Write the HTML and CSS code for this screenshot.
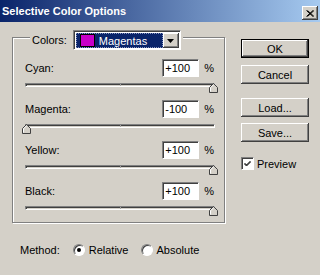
FILE: index.html
```html
<!DOCTYPE html>
<html lang="en">
<head>
  <meta charset="UTF-8">
  <title>Selective Color Options</title>
  <link rel="stylesheet" href="styles.css">
</head>
<body>
  <div class="dialog">
    <div class="titlebar">
      <span class="title">Selective Color Options</span>
      <span class="close">
        <svg width="8" height="7" viewBox="0 0 8 7"><path d="M0.5 0.5 L7 6.5 M1.5 0.5 L8 6.5 M7 0.5 L0.5 6.5 M8 0.5 L1.5 6.5" stroke="#000" stroke-width="1" fill="none"/></svg>
      </span>
    </div>

    <div class="content">
      <div class="left">
        <div class="group">
          <div class="group-head">
            <span class="colors-label">Colors:</span>
            <div class="combo">
              <div class="combo-value">
                <span class="swatch"></span>
                <span>Magentas</span>
              </div>
              <span class="combo-btn">
                <svg width="7" height="4" viewBox="0 0 7 4"><path d="M0 0 H7 L3.5 4 Z" fill="#000"/></svg>
              </span>
            </div>
          </div>

          <div class="adjs">
            <div class="adj">
              <div class="adj-top">
                <span>Cyan:</span>
                <span class="val"><span class="field">+100</span><span class="pct">%</span></span>
              </div>
              <div class="slider">
                <div class="track"></div>
                <svg class="thumb" style="left: calc((100% - 9px) * 1);" width="9" height="10" viewBox="0 0 9 10"><path d="M0.5 9.5 V4.5 L4.5 0.5 L8.5 4.5 V9.5 Z" fill="#d4d0c8" stroke="#404040"/><path d="M1.5 8.5 V4.8 L4.5 1.8" fill="none" stroke="#fff"/></svg>
              </div>
            </div>
            <div class="adj">
              <div class="adj-top">
                <span>Magenta:</span>
                <span class="val"><span class="field">-100</span><span class="pct">%</span></span>
              </div>
              <div class="slider">
                <div class="track"></div>
                <svg class="thumb" style="left: calc((100% - 9px) * 0);" width="9" height="10" viewBox="0 0 9 10"><path d="M0.5 9.5 V4.5 L4.5 0.5 L8.5 4.5 V9.5 Z" fill="#d4d0c8" stroke="#404040"/><path d="M1.5 8.5 V4.8 L4.5 1.8" fill="none" stroke="#fff"/></svg>
              </div>
            </div>
            <div class="adj">
              <div class="adj-top">
                <span>Yellow:</span>
                <span class="val"><span class="field">+100</span><span class="pct">%</span></span>
              </div>
              <div class="slider">
                <div class="track"></div>
                <svg class="thumb" style="left: calc((100% - 9px) * 1);" width="9" height="10" viewBox="0 0 9 10"><path d="M0.5 9.5 V4.5 L4.5 0.5 L8.5 4.5 V9.5 Z" fill="#d4d0c8" stroke="#404040"/><path d="M1.5 8.5 V4.8 L4.5 1.8" fill="none" stroke="#fff"/></svg>
              </div>
            </div>
            <div class="adj">
              <div class="adj-top">
                <span>Black:</span>
                <span class="val"><span class="field">+100</span><span class="pct">%</span></span>
              </div>
              <div class="slider">
                <div class="track"></div>
                <svg class="thumb" style="left: calc((100% - 9px) * 1);" width="9" height="10" viewBox="0 0 9 10"><path d="M0.5 9.5 V4.5 L4.5 0.5 L8.5 4.5 V9.5 Z" fill="#d4d0c8" stroke="#404040"/><path d="M1.5 8.5 V4.8 L4.5 1.8" fill="none" stroke="#fff"/></svg>
              </div>
            </div>
          </div>
        </div>

        <div class="method">
          <span class="method-label">Method:</span>
          <span class="radio checked"></span>
          <span class="radio-text">Relative</span>
          <span class="radio"></span>
          <span class="radio-text">Absolute</span>
        </div>
      </div>

      <div class="right">
        <div class="btn default">OK</div>
        <div class="btn btn-cancel">Cancel</div>
        <div class="btn btn-load">Load...</div>
        <div class="btn btn-save">Save...</div>
        <div class="preview">
          <span class="check">
            <svg width="7" height="7" viewBox="0 0 7 7"><path d="M0.5 3 L2.5 5 L6.5 1 M0.5 4 L2.5 6 L6.5 2" stroke="#000" fill="none"/></svg>
          </span>
          <span>Preview</span>
        </div>
      </div>
    </div>
  </div>
</body>
</html>
```

FILE: styles.css
```css
body { margin: 0; font-family: "Liberation Sans", Arial, sans-serif; font-size: 11px; color: #000; }
.dialog { width: 320px; height: 275px; background: #d4d0c8; overflow: hidden; }

/* title bar */
.titlebar { height: 22px; display: flex; justify-content: space-between; align-items: flex-start;
  background: linear-gradient(to right, #0a246a, #a6caf0); }
.title { color: #fff; font-weight: bold; padding-left: 2px; margin-top: 5px; }
.close { width: 16px; height: 14px; margin-top: 6px; margin-right: 2px; background: #d4d0c8;
  display: flex; align-items: center; justify-content: center; box-sizing: border-box;
  box-shadow: inset -1px -1px #404040, inset 1px 1px #fff, inset -2px -2px #808080; }

.content { display: flex; }
.left { width: 229px; padding-left: 12px; padding-top: 15px; box-sizing: border-box; }
.right { margin-left: 12px; width: 68px; display: flex; flex-direction: column; }

/* group box */
.group { width: 213px; box-sizing: border-box; border: 1px solid #808080;
  box-shadow: inset 1px 1px #fff, 1px 1px #fff; padding: 0 8px 6px 12px; }
.group-head { display: flex; align-items: center; height: 20px; margin-top: -8px; margin-left: 5px;
  padding: 0 2px; background: #d4d0c8; width: fit-content; }
.colors-label { margin-right: 6px; }
.combo { display: flex; width: 108px; height: 20px; box-sizing: border-box; background: #fff;
  border: 1px solid; border-color: #808080 #fff #fff #808080; box-shadow: inset 1px 1px #404040; padding: 2px 1px 1px 2px; }
.combo-value { flex: 1; display: flex; align-items: center; background: #0a246a; color: #fff;
  outline: 1px dotted #8a96c0; outline-offset: -1px; padding-left: 4px; }
.swatch { width: 13px; height: 11px; background: #c800c8; border: 1px solid #000; margin-right: 4px; }
.combo-btn { width: 16px; display: flex; align-items: center; justify-content: center; background: #d4d0c8;
  box-shadow: inset -1px -1px #404040, inset 1px 1px #fff, inset -2px -2px #808080; }

/* adjustment rows */
.adjs { margin-top: 9px; display: flex; flex-direction: column; gap: 7px; }
.adj-top { display: flex; justify-content: space-between; align-items: center; height: 18px; }
.val { display: flex; align-items: center; }
.field { width: 37px; height: 18px; box-sizing: border-box; background: #fff; line-height: 16px; padding-left: 2px;
  border: 1px solid; border-color: #808080 #fff #fff #808080; box-shadow: inset 1px 1px #404040; }
.pct { margin-left: 5px; padding-right: 2px; }
.slider { position: relative; height: 10px; margin: 6px -2px 0 -3px; }
.track { position: relative; height: 4px; margin: 5px 3px 0 3px; box-sizing: border-box;
  border: 1px solid; border-color: #808080 #fff #fff #808080; background: #d4d0c8; box-shadow: inset 1px 1px #404040; }
.track::after { content: ""; position: absolute; left: 50%; top: 0; width: 1px; height: 2px; background: #a0a0a0; }
.thumb { position: absolute; top: 0; display: block; }

/* method */
.method { display: flex; align-items: center; height: 13px; margin-top: 20px; margin-left: 8px; }
.method-label { margin-right: 13px; }
.radio { width: 12px; height: 12px; box-sizing: border-box; border-radius: 50%; background: #fff;
  border: 1px solid; border-color: #808080 #fff #fff #808080; box-shadow: inset 1px 1px #404040;
  display: flex; align-items: center; justify-content: center; margin-right: 4px; }
.radio.checked::after { content: ""; width: 4px; height: 4px; border-radius: 50%; background: #000; }
.radio-text { margin-right: 12px; }

/* buttons */
.btn { height: 19px; box-sizing: border-box; display: flex; align-items: center; justify-content: center;
  background: #d4d0c8; box-shadow: inset -1px -1px #404040, inset 1px 1px #fff, inset -2px -2px #808080; }
.btn.default { margin-top: 17px; border: 1px solid #000; }
.btn-cancel { margin-top: 7px; }
.btn-load { margin-top: 14px; }
.btn-save { margin-top: 6px; }
.preview { display: flex; align-items: center; margin-top: 15px; }
.check { width: 13px; height: 13px; box-sizing: border-box; background: #fff; margin-right: 3px;
  border: 1px solid; border-color: #808080 #fff #fff #808080; box-shadow: inset 1px 1px #404040;
  display: flex; align-items: center; justify-content: center; }
```
